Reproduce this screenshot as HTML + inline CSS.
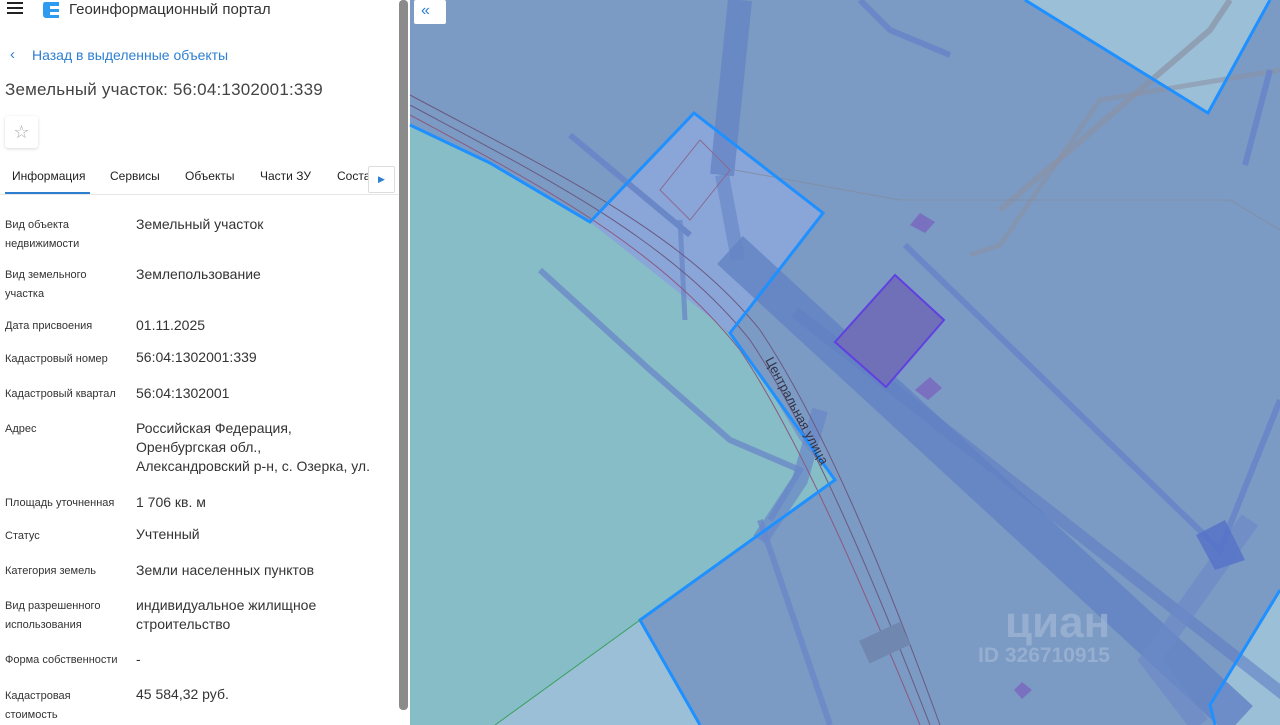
<!DOCTYPE html>
<html><head><meta charset="utf-8"><style>
body{margin:0;width:1280px;height:725px;overflow:hidden;font-family:"Liberation Sans",sans-serif;background:#fff;position:relative}
.p{position:absolute;left:0;top:0;width:410px;height:725px;background:#fff;overflow:hidden}
.t{position:absolute;white-space:nowrap}
.l{position:absolute;left:5px;font-size:11px;color:#333;line-height:19px}
.v{position:absolute;left:136px;font-size:14px;color:#333;line-height:19px}
</style></head><body>
<div class="p">
 <div style="position:absolute;left:7px;top:2px;width:16px;height:2px;background:#222;box-shadow:0 5px 0 #222,0 10px 0 #222"></div>
 <svg style="position:absolute;left:42px;top:0" width="20" height="18" viewBox="0 0 20 18"><path d="M3 2h14v4H8v3h9v3H8v3h9v3H4Q1 18 1 14V5Q1 2 3 2z" fill="#2d9cf0"/></svg>
 <div class="t" style="left:69px;top:1px;font-size:15px;color:#333">Геоинформационный портал</div>
 <div class="t" style="left:10px;top:46px;font-size:15px;color:#2f7fd0">‹</div>
 <div class="t" style="left:32px;top:47px;font-size:14px;color:#2f7fd0">Назад в выделенные объекты</div>
 <div class="t" style="left:5px;top:80px;font-size:17px;color:#444;letter-spacing:0.2px">Земельный участок: 56:04:1302001:339</div>
 <div style="position:absolute;left:5px;top:116px;width:33px;height:32px;border-radius:3px;box-shadow:0 1px 3px rgba(0,0,0,.15);background:#fff;text-align:center;line-height:32px;color:#aaa;font-size:18px">☆</div>
 <div class="t" style="left:12px;top:169px;font-size:12px;color:#222">Информация</div>
 <div class="t" style="left:110px;top:169px;font-size:12px;color:#222">Сервисы</div>
 <div class="t" style="left:185px;top:169px;font-size:12px;color:#222">Объекты</div>
 <div class="t" style="left:260px;top:169px;font-size:12px;color:#222">Части ЗУ</div>
 <div class="t" style="left:337px;top:169px;font-size:12px;color:#222">Соста</div>
 <div style="position:absolute;left:368px;top:166px;width:25px;height:25px;background:#fff;border:1px solid #ddd;border-radius:2px;color:#2f7fd0;font-size:9px;text-align:center;line-height:25px">▶</div>
 <div style="position:absolute;left:5px;top:192px;width:85px;height:2px;background:#2f7fd0"></div>
 <div style="position:absolute;left:0;top:194px;width:398px;height:1px;background:#e6e6e6"></div>
 <div class="l" style="top:216px">Вид объекта<br>недвижимости</div><div class="v" style="top:215px">Земельный участок</div>
 <div class="l" style="top:266px">Вид земельного<br>участка</div><div class="v" style="top:265px">Землепользование</div>
 <div class="l" style="top:317px">Дата присвоения</div><div class="v" style="top:316px">01.11.2025</div>
 <div class="l" style="top:350px">Кадастровый номер</div><div class="v" style="top:348px">56:04:1302001:339</div>
 <div class="l" style="top:385px">Кадастровый квартал</div><div class="v" style="top:384px">56:04:1302001</div>
 <div class="l" style="top:420px">Адрес</div><div class="v" style="top:419px">Российская Федерация,<br>Оренбургская обл.,<br>Александровский р-н, с. Озерка, ул.</div>
 <div class="l" style="top:494px">Площадь уточненная</div><div class="v" style="top:493px">1 706 кв. м</div>
 <div class="l" style="top:527px">Статус</div><div class="v" style="top:525px">Учтенный</div>
 <div class="l" style="top:562px">Категория земель</div><div class="v" style="top:561px">Земли населенных пунктов</div>
 <div class="l" style="top:597px">Вид разрешенного<br>использования</div><div class="v" style="top:596px">индивидуальное жилищное<br>строительство</div>
 <div class="l" style="top:651px">Форма собственности</div><div class="v" style="top:650px">-</div>
 <div class="l" style="top:687px">Кадастровая<br>стоимость</div><div class="v" style="top:685px">45 584,32 руб.</div>
 <div style="position:absolute;left:399px;top:0;width:9px;height:710px;background:#8b8b8b;border-radius:4px"></div>
</div>
<svg style="position:absolute;left:0;top:0" width="1280" height="725" viewBox="0 0 1280 725">
 <rect x="410" y="0" width="870" height="725" fill="#7b9ac4"/>
 <polygon points="1025,0 1208,113 1270,0" fill="#9bbfd6"/>
 <polygon points="1210,705 1280,590 1280,725 1215,725" fill="#9bbfd6"/>
 <polygon points="410,125 490,163 590,222 650,262 700,305 735,340 770,390 800,440 835,480 640,620 495,725 410,725" fill="#86bdc6"/>
 <polygon points="640,620 495,725 700,725" fill="#9bbfd6"/>
 <polygon points="694,113 823,213 730,333 590,222" fill="#8aa5d8"/>
 <g fill="none" stroke-linecap="butt">
  <path d="M740,0 L722,175" stroke="#6484c4" stroke-width="24" opacity=".8"/>
  <path d="M722,175 L738,260" stroke="#6484c4" stroke-width="14" opacity=".6"/>
  <path d="M730,250 L1240,720" stroke="#6484c4" stroke-width="38" opacity=".85"/>
  <path d="M795,312 L1310,715" stroke="#5f7fc4" stroke-width="12" opacity=".6"/>
  <path d="M1000,210 L1210,30 L1230,0" stroke="#8a93a6" stroke-width="6" opacity=".7"/>
  <path d="M970,255 L1000,245 L1100,100 L1280,70" stroke="#8a93a6" stroke-width="5" opacity=".6"/>
  <path d="M860,0 L890,30 L950,55" stroke="#6a88c8" stroke-width="6"/>
  <path d="M1270,70 L1245,165" stroke="#6a88c8" stroke-width="6"/>
  <path d="M905,245 L1220,550 L1280,400" stroke="#6a88c8" stroke-width="6"/>
  <path d="M570,135 L690,235" stroke="#6a88c8" stroke-width="6"/>
  <path d="M540,270 L650,370 L730,440 L800,470 L770,520" stroke="#6a88c8" stroke-width="6" opacity=".8"/>
  <path d="M820,410 L800,480 L760,540" stroke="#6a88c8" stroke-width="16" opacity=".7"/>
  <path d="M680,220 L685,320" stroke="#6a88c8" stroke-width="5" opacity=".8"/>
  <path d="M760,520 L830,725" stroke="#6a88c8" stroke-width="6" opacity=".8"/>
  <path d="M1250,520 L1150,660 L1200,725" stroke="#6a88c8" stroke-width="20" opacity=".6"/>
  <path d="M410,95 C550,170 680,230 760,330 C820,420 880,560 940,725" stroke="#6a5a80" stroke-width="1"/>
  <path d="M410,105 C550,180 670,240 750,340 C810,430 870,570 930,725" stroke="#6a5a80" stroke-width="1"/>
  <path d="M410,115 C550,190 660,250 740,350 C800,440 860,580 920,725" stroke="#8a5a80" stroke-width="1"/>
  <path d="M735,170 L900,200 L1230,200 L1280,230" stroke="#8090a8" stroke-width="1"/>
  <path d="M410,125 L490,163 L590,222 L694,113 L823,213 L730,333 L835,480 L640,620 L700,725" stroke="#1e90ff" stroke-width="3"/>
  <path d="M1025,0 L1208,113 L1270,0" stroke="#1e90ff" stroke-width="3"/>
  <path d="M1280,590 L1210,705 L1215,725" stroke="#1e90ff" stroke-width="3"/>
  <path d="M640,620 L495,725" stroke="#3aa060" stroke-width="1"/>
 </g>
 <polygon points="895,275 944,320 886,387 835,342" fill="#7070b8" stroke="#6040e0" stroke-width="2"/>
 <polygon points="920,213 935,222 925,233 910,225" fill="#7a70c0"/>
 <polygon points="930,377 942,388 928,400 915,390" fill="#7a70c0"/>
 <polygon points="1022,682 1032,690 1022,699 1014,690" fill="#7a70c0"/>
 <polygon points="1225,520 1245,560 1215,570 1196,535" fill="#5570c8" opacity=".8"/>
 <polygon points="700,140 730,170 690,220 660,190" fill="none" stroke="#8a6a90" stroke-width="1"/>
 <rect x="862" y="630" width="45" height="25" fill="#7088b0" transform="rotate(-25 885 642)"/>
 <text x="0" y="0" font-size="13" fill="#334" transform="translate(765,360) rotate(62)" font-family="Liberation Sans">Центральная улица</text>
 <text x="1005" y="637" font-size="44" font-weight="bold" fill="#a8bcd8" opacity=".6" font-family="Liberation Sans">циан</text>
 <text x="978" y="662" font-size="21" font-weight="bold" fill="#a8bcd8" opacity=".6" font-family="Liberation Sans">ID 326710915</text>
 <rect x="414" y="0" width="32" height="24" rx="2" fill="#fff"/>
 <text x="421" y="15" font-size="16" fill="#2f7fd0" font-family="Liberation Sans">«</text>
</svg>
</body></html>
